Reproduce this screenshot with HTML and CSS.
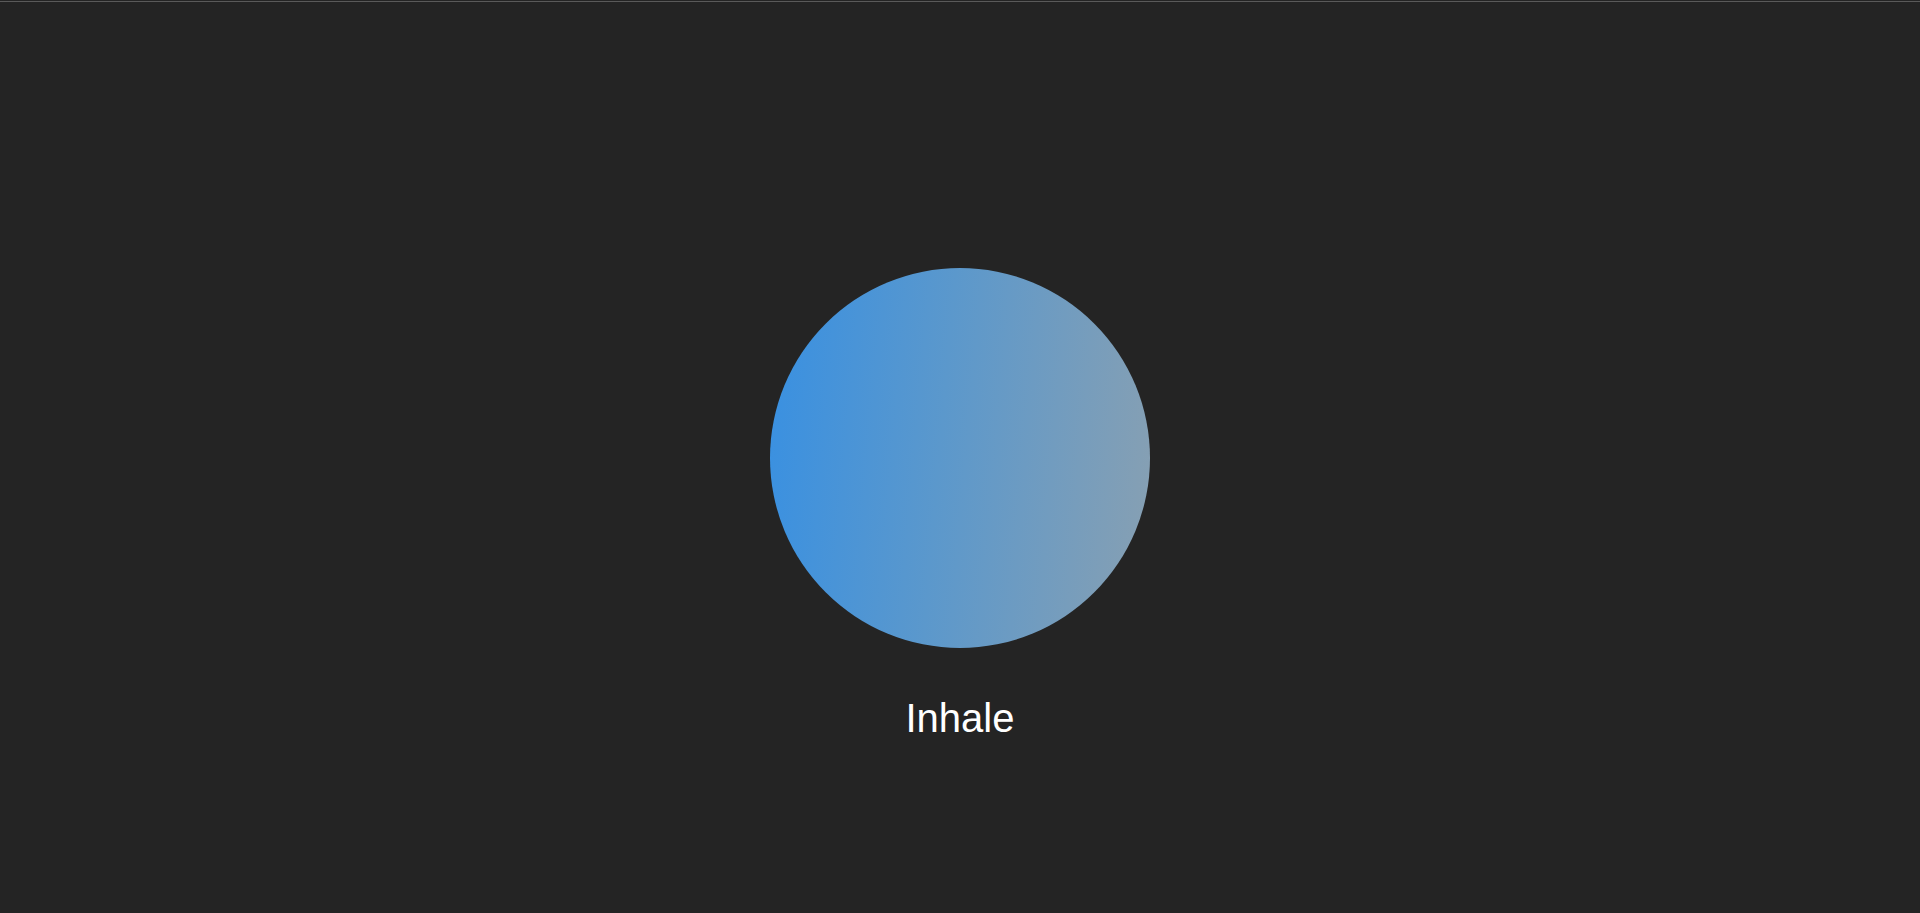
FILE: index.html
```html
<!DOCTYPE html>
<html lang="en">
<head>
<meta charset="utf-8">
<title>Breathe</title>
<link rel="stylesheet" href="styles.css">
</head>
<body>
<div class="topline"></div>
<main class="stage">
  <div class="breath">
    <div class="circle"></div>
    <div class="label">Inhale</div>
  </div>
</main>
</body>
</html>
```

FILE: styles.css
```css
html, body {
  margin: 0;
  padding: 0;
  height: 100%;
}
body {
  background: #242424;
  font-family: "Liberation Sans", Arial, Helvetica, sans-serif;
  display: flex;
  flex-direction: column;
  overflow: hidden;
}
.topline {
  height: 1px;
  border-top: 1px solid #242424;
  background: #5a5a5a;
  flex: none;
}
.stage {
  flex: 1;
  display: flex;
  align-items: center;
  justify-content: center;
}
.breath {
  position: relative;
  width: 380px;
  height: 380px;
}
.circle {
  width: 380px;
  height: 380px;
  border-radius: 50%;
  background: linear-gradient(95deg, #3890e2 0%, #5b98cc 45%, #88a0b2 100%);
}
.label {
  position: absolute;
  top: 100%;
  left: 0;
  right: 0;
  margin-top: 47px;
  text-align: center;
  color: #ffffff;
  font-size: 40px;
  line-height: 46px;
}
```
